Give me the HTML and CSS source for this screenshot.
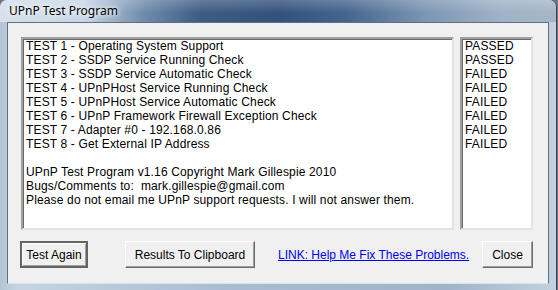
FILE: index.html
```html
<!DOCTYPE html>
<html lang="en">
<head>
    <meta charset="UTF-8">
    <title>UPnP Test Program</title>
    <link rel="stylesheet" href="styles.css">
</head>
<body>
    <div class="window">
        <div class="titlebar">UPnP Test Program</div>
        <div class="client">
            <div class="lists">
                <div class="listbox results">
                    <div>TEST 1 - Operating System Support</div>
                    <div>TEST 2 - SSDP Service Running Check</div>
                    <div>TEST 3 - SSDP Service Automatic Check</div>
                    <div>TEST 4 - UPnPHost Service Running Check</div>
                    <div>TEST 5 - UPnPHost Service Automatic Check</div>
                    <div>TEST 6 - UPnP Framework Firewall Exception Check</div>
                    <div>TEST 7 - Adapter #0 - 192.168.0.86</div>
                    <div>TEST 8 - Get External IP Address</div>
                    <div>&nbsp;</div>
                    <div>UPnP Test Program v1.16 Copyright Mark Gillespie 2010</div>
                    <div>Bugs/Comments to:&nbsp; mark.gillespie@gmail.com</div>
                    <div>Please do not email me UPnP support requests. I will not answer them.</div>
                </div>
                <div class="listbox status">
                    <div>PASSED</div>
                    <div>PASSED</div>
                    <div>FAILED</div>
                    <div>FAILED</div>
                    <div>FAILED</div>
                    <div>FAILED</div>
                    <div>FAILED</div>
                    <div>FAILED</div>
                </div>
            </div>
            <div class="actions">
                <button class="btn default">Test Again</button>
                <button class="btn clip">Results To Clipboard</button>
                <a class="help-link" href="#">LINK: Help Me Fix These Problems.</a>
                <button class="btn close">Close</button>
            </div>
        </div>
    </div>
</body>
</html>
```

FILE: styles.css
```css
body {
    margin: 0;
    background: #6d7784;
    width: 558px;
    height: 290px;
    overflow: hidden;
}
.window {
    width: 556px;
    height: 290px;
    border-radius: 7px 7px 0 0;
    background: linear-gradient(90deg, #b3c4d6 0%, #c6d4e3 3%, #a9bdd2 40%, #9fb3c9 80%, #c3d1df 100%);
    box-shadow: 1px 0 0 #3a4656;
}
.titlebar {
    height: 22px;
    padding-left: 9px;
    font-family: "Segoe UI", "Noto Sans", sans-serif;
    font-size: 12px;
    line-height: 22px;
    color: #000;
    text-shadow: 0 0 6px #fff, 0 0 4px #fff;
    border-radius: 7px 7px 0 0;
    background:
        linear-gradient(180deg, rgba(255,255,255,0.2) 0%, rgba(255,255,255,0) 60%),
        linear-gradient(90deg, #d6e1ec 0%, #c7d6e5 15%, #6f8aab 26%, #3d5c84 36%, #33527b 50%, #44648d 62%, #7a94b2 76%, #9fb2c7 90%, #a6b6c7 100%);
}
.client {
    margin: 0 7px 0 7px;
    height: 262px;
    border: 1px solid #5f6e80;
    border-bottom-color: #d8e2ec;
    background: #f0f0f0;
    box-sizing: border-box;
    padding: 14px 14px 0 13px;
    font-family: "Liberation Sans", Arial, sans-serif;
    font-size: 12px;
    color: #000;
}
.lists {
    display: flex;
    gap: 6px;
    height: 193px;
}
.listbox {
    background: #fff;
    border: 2px solid;
    border-color: #a0a0a0 #e3e3e3 #e3e3e3 #a0a0a0;
    box-shadow: inset 1px 1px 0 #696969;
    box-sizing: border-box;
    padding: 0 0 0 3px;
    line-height: 14px;
    letter-spacing: 0.15px;
    white-space: nowrap;
    overflow: hidden;
}
.results {
    width: 433px;
}
.status {
    width: 73px;
}
.actions {
    display: flex;
    align-items: center;
    margin-top: 11px;
    margin-left: -1px;
}
.btn {
    height: 27px;
    padding: 0;
    font-family: "Liberation Sans", Arial, sans-serif;
    font-size: 12px;
    color: #000;
    background: #f0f0f0;
    border: 1px solid;
    border-color: #fff #696969 #696969 #fff;
    box-shadow: inset -1px -1px 0 #a0a0a0;
}
.default {
    width: 68px;
    border: 2px solid #646464;
    box-shadow: inset 1px 1px 0 #fff, inset -1px -1px 0 #a0a0a0;
}
.clip {
    width: 130px;
    margin-left: 37px;
}
.help-link {
    margin-left: 23px;
    color: #0000ff;
    text-decoration: underline;
    width: 190px;
    white-space: nowrap;
}
.close {
    width: 51px;
    margin-left: 14px;
}
```
